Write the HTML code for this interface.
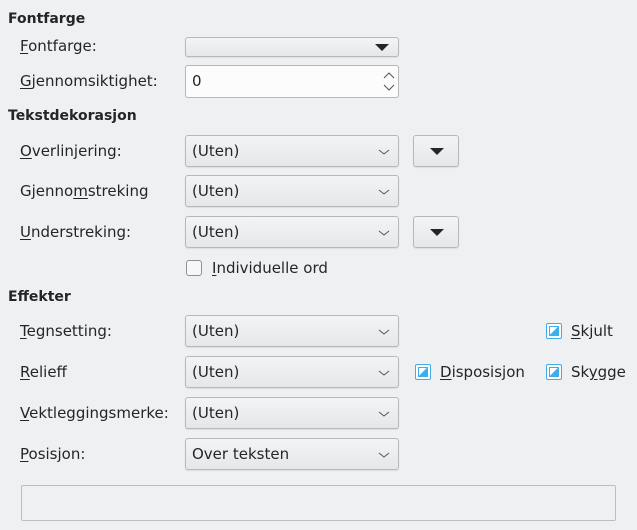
<!DOCTYPE html>
<html><head><meta charset="utf-8"><style>
*{box-sizing:border-box;margin:0;padding:0}
body{width:637px;height:530px;background:#eff0f1;font-family:"DejaVu Sans","Liberation Sans",sans-serif;font-size:15px;color:#232629;position:relative;overflow:hidden}
.a{position:absolute;white-space:nowrap;line-height:18px}
.h{font-weight:bold;font-size:14px}
.cb{position:absolute;border:1px solid #b6b8ba;border-radius:3px;background:linear-gradient(#f3f4f5,#e6e7e8);box-shadow:0 1px 1px rgba(0,0,0,.08)}
.cb span{position:absolute;left:6px;top:6px;line-height:18px}
.chev{position:absolute;right:8px;top:12px;width:12px;height:8px}
.tri{position:absolute;width:0;height:0;border-left:7px solid transparent;border-right:7px solid transparent;border-top:7px solid #232629}
.chk{position:absolute;width:16px;height:16px;border:1px solid #3daee9;border-radius:2px;background:#fff}
.chk i{position:absolute;left:2px;top:2px;width:10px;height:10px;background:linear-gradient(to bottom right,transparent 50%,#3daee9 50%);border:1px solid #3daee9}
u{text-decoration:underline;text-underline-offset:2px}
</style></head><body>
<div class="a h" style="left:8px;top:10px">Fontfarge</div>
<div class="a" style="left:20px;top:37px"><u>F</u>ontfarge:</div>
<div class="cb" style="left:185px;top:37px;width:214px;height:20px"><div class="tri" style="right:9px;top:6px"></div></div>
<div class="a" style="left:20px;top:72px"><u>G</u>jennomsiktighet:</div>
<div style="position:absolute;left:185px;top:65px;width:214px;height:33px;background:#fcfcfc;border:1px solid #b6b8ba;border-radius:3px"><span class="a" style="left:6px;top:6px">0</span>
<svg style="position:absolute;right:3px;top:6px" width="12" height="20"><path d="M1 6 L6 1 L11 6 M1 13 L6 18 L11 13" stroke="#555" fill="none"/></svg></div>
<div class="a h" style="left:8px;top:107px">Tekstdekorasjon</div>

<div class="a" style="left:20px;top:142px"><u>O</u>verlinjering:</div>
<div class="cb" style="left:185px;top:135px;width:214px;height:32px"><span>(Uten)</span><svg class="chev" viewBox="0 0 12 8"><path d="M1 2 L6 6 L11 2" stroke="#555" fill="none"/></svg></div>
<div class="cb" style="left:413px;top:135px;width:46px;height:32px"><div class="tri" style="left:16px;top:12px"></div></div>

<div class="a" style="left:20px;top:182px">Gjenno<u>m</u>streking</div>
<div class="cb" style="left:185px;top:175px;width:214px;height:32px"><span>(Uten)</span><svg class="chev" viewBox="0 0 12 8"><path d="M1 2 L6 6 L11 2" stroke="#555" fill="none"/></svg></div>

<div class="a" style="left:20px;top:223px"><u>U</u>nderstreking:</div>
<div class="cb" style="left:185px;top:216px;width:214px;height:32px"><span>(Uten)</span><svg class="chev" viewBox="0 0 12 8"><path d="M1 2 L6 6 L11 2" stroke="#555" fill="none"/></svg></div>
<div class="cb" style="left:413px;top:216px;width:46px;height:32px"><div class="tri" style="left:16px;top:12px"></div></div>

<div style="position:absolute;left:186px;top:260px;width:16px;height:16px;border:1px solid #8e9092;border-radius:3px;background:#f7f7f8"></div>
<div class="a" style="left:212px;top:259px"><u>I</u>ndividuelle ord</div>

<div class="a h" style="left:8px;top:288px">Effekter</div>

<div class="a" style="left:20px;top:322px"><u>T</u>egnsetting:</div>
<div class="cb" style="left:185px;top:315px;width:214px;height:32px"><span>(Uten)</span><svg class="chev" viewBox="0 0 12 8"><path d="M1 2 L6 6 L11 2" stroke="#555" fill="none"/></svg></div>
<div class="chk" style="left:546px;top:323px"><i></i></div>
<div class="a" style="left:571px;top:322px"><u>S</u>kjult</div>

<div class="a" style="left:20px;top:363px"><u>R</u>elieff</div>
<div class="cb" style="left:185px;top:356px;width:214px;height:32px"><span>(Uten)</span><svg class="chev" viewBox="0 0 12 8"><path d="M1 2 L6 6 L11 2" stroke="#555" fill="none"/></svg></div>
<div class="chk" style="left:415px;top:364px"><i></i></div>
<div class="a" style="left:440px;top:363px"><u>D</u>isposisjon</div>
<div class="chk" style="left:546px;top:364px"><i></i></div>
<div class="a" style="left:571px;top:363px">Sk<u>y</u>gge</div>

<div class="a" style="left:20px;top:404px"><u>V</u>ektleggingsmerke:</div>
<div class="cb" style="left:185px;top:397px;width:214px;height:32px"><span>(Uten)</span><svg class="chev" viewBox="0 0 12 8"><path d="M1 2 L6 6 L11 2" stroke="#555" fill="none"/></svg></div>

<div class="a" style="left:20px;top:445px"><u>P</u>osisjon:</div>
<div class="cb" style="left:185px;top:438px;width:214px;height:32px"><span>Over teksten</span><svg class="chev" viewBox="0 0 12 8"><path d="M1 2 L6 6 L11 2" stroke="#555" fill="none"/></svg></div>

<div style="position:absolute;left:21px;top:485px;width:595px;height:36px;border:1px solid #bcbebf;border-radius:2px;background:#eff0f1"></div>
</body></html>
